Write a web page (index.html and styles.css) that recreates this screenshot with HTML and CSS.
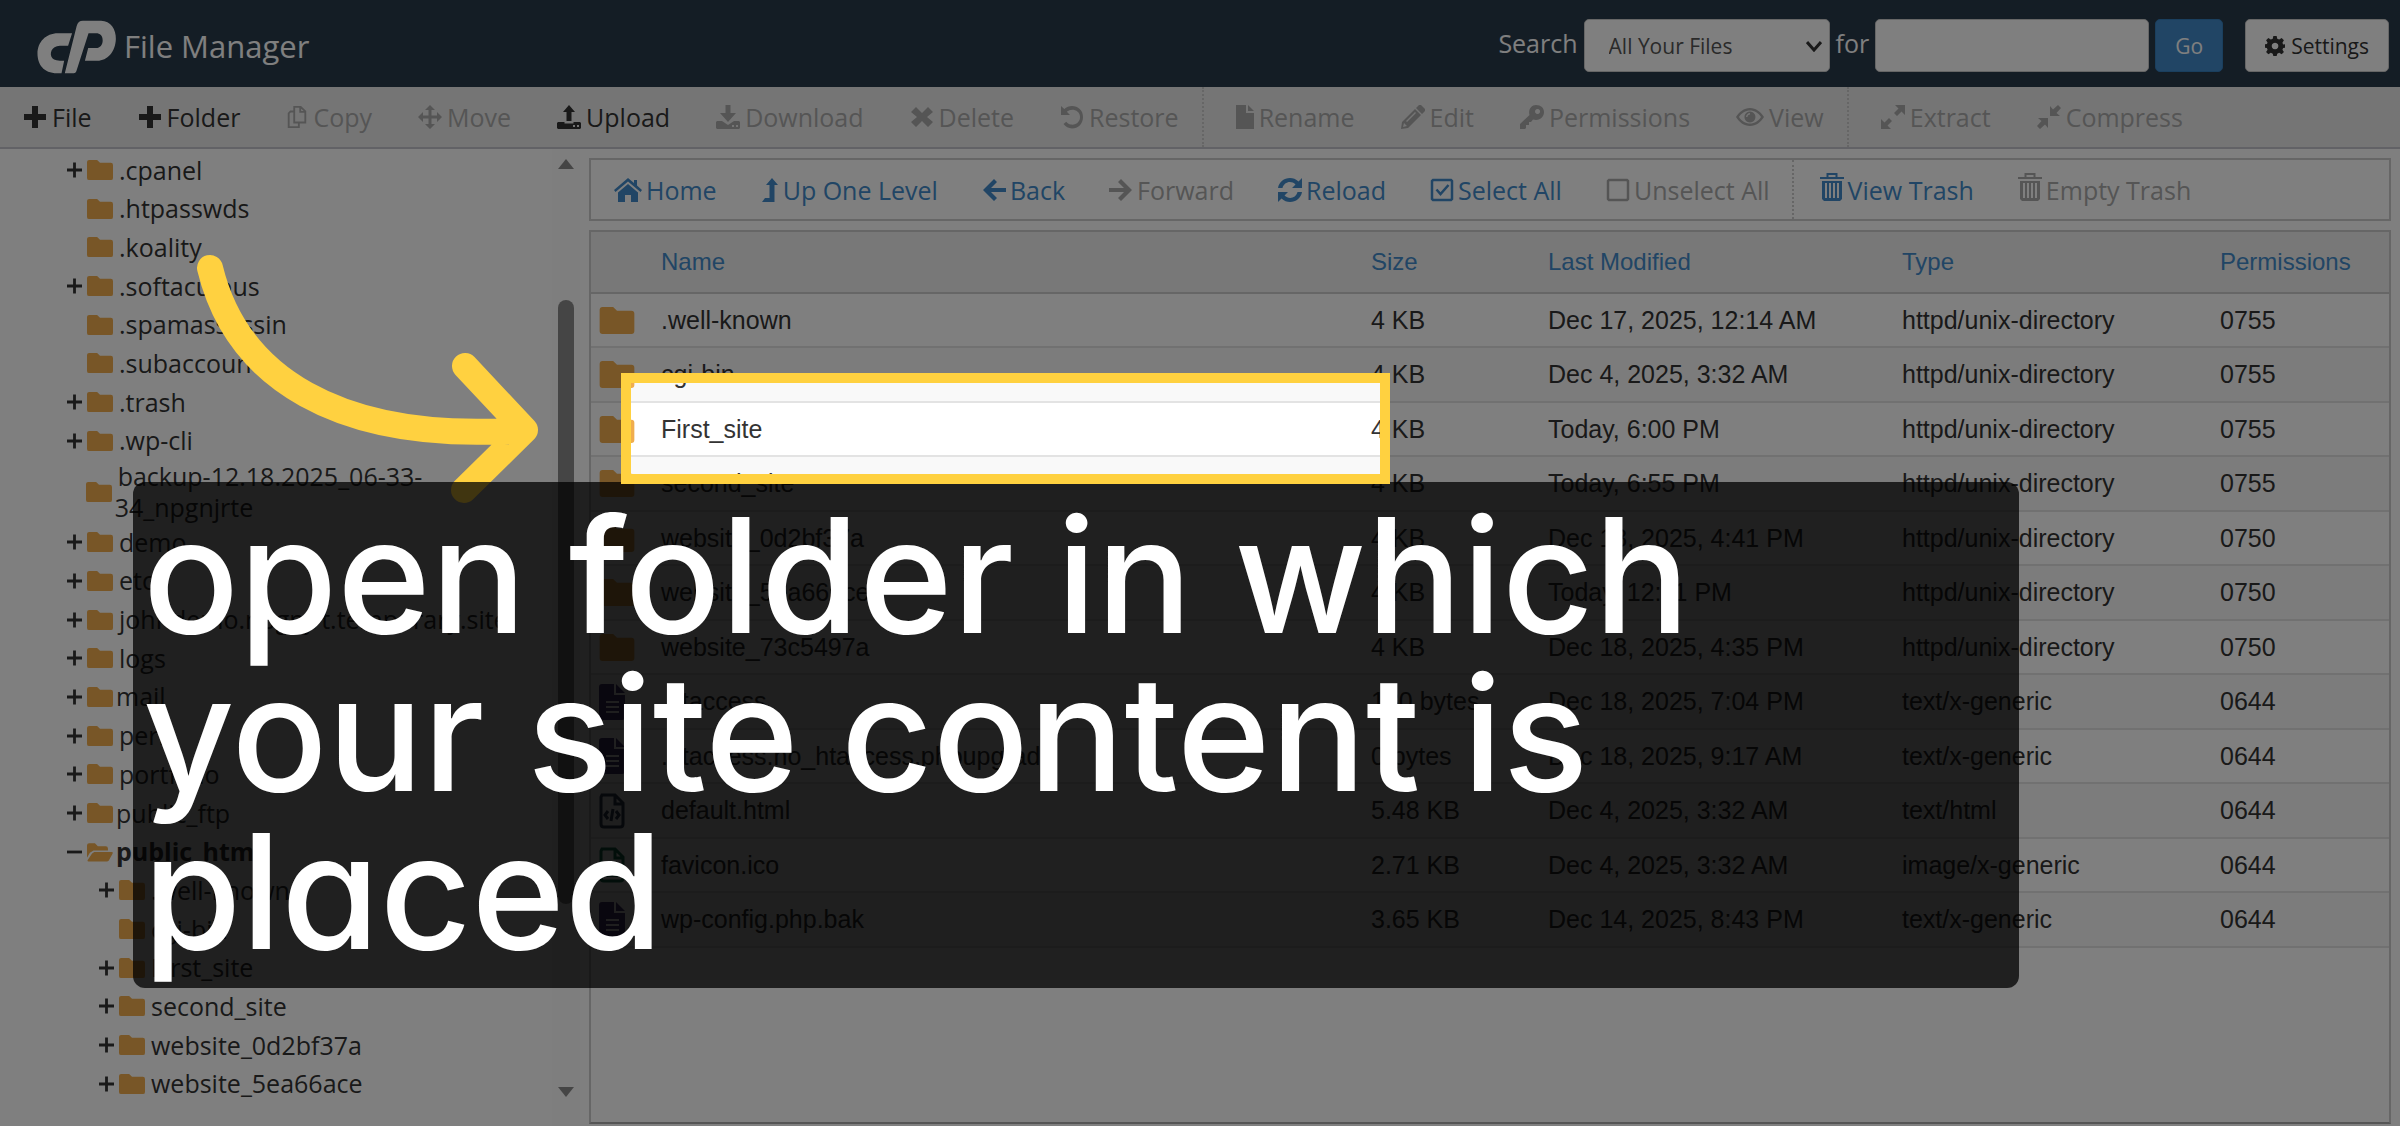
FILE: index.html
```html
<!DOCTYPE html>
<html lang="en">
<head>
    <meta charset="UTF-8">
    <meta name="viewport" content="width=device-width, initial-scale=1.0">
    <title>File Manager</title>
    <link rel="stylesheet" href="styles.css">
</head>
<body>
    <!-- Icon set -->
    <svg class="sprite" aria-hidden="true">
        <symbol id="i-plus" viewBox="0 0 24 24"><path d="M9 1h6v8h8v6h-8v8H9v-8H1V9h8z"/></symbol>
        <symbol id="i-expand" viewBox="0 0 16 16"><path d="M6.500 0h3v6.500H16v3H9.500V16h-3V9.500H0v-3h6.500z"/></symbol>
        <symbol id="i-collapse" viewBox="0 0 16 16"><path d="M0 6.500h16v3H0z"/></symbol>
        <symbol id="i-chevron" viewBox="0 0 16 12"><path d="M1 2l7 8 7-8" fill="none" stroke="currentColor" stroke-width="3"/></symbol>
        <symbol id="i-copy" viewBox="0 0 22 26"><path d="M8 2h7l5 5v12H8zM14.500 2v5.500H20M8 7H4L2 9v15h11v-5" fill="none" stroke="currentColor" stroke-width="2"/></symbol>
        <symbol id="i-move" viewBox="0 0 24 24"><path d="M12 0l5 5h-3.500v5.500H19V7l5 5-5 5v-3.500h-5.500V19H17l-5 5-5-5h3.500v-5.500H5V17l-5-5 5-5v3.500h5.500V5H7z"/></symbol>
        <symbol id="i-upload" viewBox="0 0 24 24"><path d="M12 0l6 7h-3.500v9h-5V7H6zM1 17h6.500v1.500h9V17H23l1 1v5l-1 1H1l-1-1v-5zM16 20v2h2v-2zm4 0v2h2v-2z" fill-rule="evenodd"/></symbol>
        <symbol id="i-download" viewBox="0 0 24 24"><path d="M9.500 0h5v8H20l-8 9-8-9h5.500zM1 16h5l6 4 6-4h5l1 1v6l-1 1H1l-1-1v-6zM16 20v2h2v-2zm4 0v2h2v-2z" fill-rule="evenodd"/></symbol>
        <symbol id="i-delete" viewBox="0 0 24 24"><path d="M6 2l6 6 6-6 5 5-6 5 6 5-5 5-6-6-6 6-5-5 6-5-6-5z"/></symbol>
        <symbol id="i-restore" viewBox="0 0 24 24"><path d="M1 1v9h9L6.800 6.800C9 5 12 4.300 15 5.200c4 1.300 5.800 5 4.800 8.800-1 4-5 6.300-9 5.500-2-.4-3.500-1.500-4.500-2.800L3.500 19c2 2.700 5 4.300 8.500 4.500 6 0 11-4.500 11-11.500S18 1 12 1C9 1 6.500 2 4.300 4z"/></symbol>
        <symbol id="i-rename" viewBox="0 0 18 24"><path d="M0 0h10v8h8v16H0zM12 0l6 6h-6z"/></symbol>
        <symbol id="i-edit" viewBox="0 0 24 24"><path d="M18 0h2l4 4v2l-3 3-6-6zM14 4l6 6L7 23l-7 1 1-7zM3 18l-1 4 4-1zM14 7L5 16l1 1 9-9z" fill-rule="evenodd"/></symbol>
        <symbol id="i-key" viewBox="0 0 24 24"><path d="M16 0c5 0 8 3 8 7s-3 8-8 8l-3-.5L11 17H9v3H6v3l-1 1H0v-5L9.500 10C8 5 11 0 16 0zm1.500 4a2.500 2.500 0 1 0 .1 0z" fill-rule="evenodd"/></symbol>
        <symbol id="i-eye" viewBox="0 0 28 24"><path d="M14 3c6 0 11 4 14 9-3 5-8 9-14 9S3 17 0 12c3-5 8-9 14-9zm0 2.500C9.500 5.500 5.500 8 3 12c2.500 4 6.500 6.500 11 6.500S22.500 16 25 12c-2.500-4-6.500-6.500-11-6.500zm0 1a5.500 5.500 0 1 1-.1 0zm0 1.500c-2 0-4 2-4 4h1.500c0-1.500 1-2.500 2.500-2.500z" fill-rule="evenodd"/></symbol>
        <symbol id="i-extract" viewBox="0 0 24 24"><path d="M14 0h10v10l-3.500-3.500-4.500 4.500-3-3 4.500-4.500zM8 13l3 3-4.500 4.500L10 24H0V14l3.500 3.500z"/></symbol>
        <symbol id="i-compress" viewBox="0 0 24 24"><path d="M13 1v10h10l-3.500-3L24 3l-3-3-5 4.500zM1 13h10v10l-3-3.500L3 24l-3-3 4.500-5z"/></symbol>
        <symbol id="i-gear" viewBox="0 0 24 24"><path d="M10 0h4l.7 3.300 2.300 1 3-1.800 2.700 2.700L20.900 8l.9 2.200L24 10v4l-2.200.300-.9 2.200 1.800 2.800-2.700 2.700-3-1.800-2.300 1L14 24h-4l-.7-2.800-2.300-1L4 22l-2.700-2.700 1.800-2.800-.9-2.200L0 14v-4l2.200-.300L3.100 8 1.300 5.200 4 2.500l3 1.800 2.300-1zM12 8a4 4 0 1 0 .1 0z" fill-rule="evenodd"/></symbol>
        <symbol id="i-home" viewBox="0 0 28 24"><path d="M14 6l10 8.500V24h-7v-7h-6v7H4v-9.500zM14 0l6 5V2h3v5.500l5 4.500-1.500 2L14 3.500 1.500 14 0 12z"/></symbol>
        <symbol id="i-up" viewBox="0 0 16 24"><path d="M10 0l6 7h-3.500v17H0l3-4h4.500V7H4z"/></symbol>
        <symbol id="i-back" viewBox="0 0 24 24"><path d="M12 1l3 3-6 6h15v4H9l6 6-3 3L1 12z"/></symbol>
        <symbol id="i-forward" viewBox="0 0 24 24"><path d="M12 1L9 4l6 6H0v4h15l-6 6 3 3 11-11z"/></symbol>
        <symbol id="i-reload" viewBox="0 0 24 24"><path d="M0 10C1 4 6 0 12 0c3 0 6 1 8.500 3.500L24 0v10H14l3.500-3.500C13 2 6 4 4.500 10zM24 14c-1 6-6 10-12 10-3 0-6-1-8.500-3.500L0 24V14h10l-3.500 3.500C11 22 18 20 19.500 14z"/></symbol>
        <symbol id="i-checked" viewBox="0 0 24 24"><path d="M3 2h18l1 1v18l-1 1H3l-1-1V3zM6.500 11.500l4 4.500 8-9" fill="none" stroke="currentColor" stroke-width="2.500"/></symbol>
        <symbol id="i-unchecked" viewBox="0 0 24 24"><path d="M3 2h18l1 1v18l-1 1H3l-1-1V3z" fill="none" stroke="currentColor" stroke-width="2.500"/></symbol>
        <symbol id="i-trash" viewBox="0 0 24 28"><path d="M7.500 4V1h9v3M0 5h24" fill="none" stroke="currentColor" stroke-width="2"/><path d="M2 8h20v18l-2 2H4l-2-2zM5 10v15h2V10zm4 0v15h2V10zm4 0v15h2V10zm4 0v15h2V10z" fill-rule="evenodd"/></symbol>
        <symbol id="i-folder" viewBox="0 0 36 28"><path d="M3 0h11l4 4h15q3 0 3 3v18q0 3-3 3H3q-3 0-3-3V3q0-3 3-3z"/></symbol>
        <symbol id="i-folder-open" viewBox="0 0 36 28"><path d="M3 2h8l4 4h11q3 0 3 3v3H9l-5 3-4 7V5q0-3 3-3zM10 14h24q3 0 1 3l-5 9-2 1H2q-2 0-1-2l6-9z"/></symbol>
        <symbol id="i-file" viewBox="0 0 26 36"><path d="M3 0h12v11h11v22q0 3-3 3H3q-3 0-3-3V3q0-3 3-3zM17 0l9 9h-9zM7 17v2h13v-2zm0 5v2h13v-2zm0 5v2h13v-2z" fill-rule="evenodd"/></symbol>
        <symbol id="i-code" viewBox="0 0 26 36"><path d="M3 2h13l8 8v21q0 3-3 3H5q-3 0-3-3V4zM16 2v9h8M9 18l-3 4 3 4m8-8l3 4-3 4m-3-10l-2 12" fill="none" stroke="currentColor" stroke-width="3"/></symbol>
        <symbol id="i-image" viewBox="0 0 26 36"><path d="M3 2h13l8 8v21q0 3-3 3H5q-3 0-3-3V4zM16 2v9h8" fill="none" stroke="currentColor" stroke-width="3"/><path d="M5 30v-4l4-4 3 3 6-7 4 4v8zM6 15h5v5H6z"/></symbol>
    </svg>

    <!-- Top bar with the logo and the search form -->
    <header class="topbar">
        <svg class="logo" viewBox="50 28 240 164" aria-label="cPanel"><path d="M155 68L143 106H118C92 106 84 132 96 145Q102 152 131 152L123 190H110C68 190 50 162 50 130C50 95 75 68 112 68ZM188 30H243C272 30 289 56 288 86C287 125 262 152 232 152H194L204 113H228C240 113 248 103 248 90C248 75 240 68 228 68H205L168 184Q166 190 160 190H133L169 46Q173 30 188 30Z"/></svg>
        <h1>File Manager</h1>
        <form class="search">
            <label for="search-in">Search</label>
            <span class="select-box">
                <select id="search-in"><option>All Your Files</option></select>
                <svg class="chevron"><use href="#i-chevron"/></svg>
            </span>
            <label for="search-text">for</label>
            <input type="text" id="search-text">
            <button type="button" class="go">Go</button>
            <button type="button" class="settings"><svg class="icon"><use href="#i-gear"/></svg>Settings</button>
        </form>
    </header>

    <!-- Actions -->
    <nav class="toolbar">
        <button><svg class="icon"><use href="#i-plus"/></svg>File</button>
        <button><svg class="icon"><use href="#i-plus"/></svg>Folder</button>
        <button disabled><svg class="icon medium"><use href="#i-copy"/></svg>Copy</button>
        <button disabled><svg class="icon"><use href="#i-move"/></svg>Move</button>
        <button><svg class="icon"><use href="#i-upload"/></svg>Upload</button>
        <button disabled><svg class="icon"><use href="#i-download"/></svg>Download</button>
        <button disabled><svg class="icon"><use href="#i-delete"/></svg>Delete</button>
        <button disabled><svg class="icon"><use href="#i-restore"/></svg>Restore</button>
        <span class="divider"></span>
        <button disabled><svg class="icon narrow"><use href="#i-rename"/></svg>Rename</button>
        <button disabled><svg class="icon"><use href="#i-edit"/></svg>Edit</button>
        <button disabled><svg class="icon"><use href="#i-key"/></svg>Permissions</button>
        <button disabled><svg class="icon wide"><use href="#i-eye"/></svg>View</button>
        <span class="divider"></span>
        <button disabled><svg class="icon"><use href="#i-extract"/></svg>Extract</button>
        <button disabled><svg class="icon"><use href="#i-compress"/></svg>Compress</button>
    </nav>

    <div class="main">
        <!-- Directory tree -->
        <aside class="sidebar">
            <ul class="tree">
                <li><svg class="toggle"><use href="#i-expand"/></svg><svg class="folder"><use href="#i-folder"/></svg><a href="#">.cpanel</a></li>
                <li><span class="toggle"></span><svg class="folder"><use href="#i-folder"/></svg><a href="#">.htpasswds</a></li>
                <li><span class="toggle"></span><svg class="folder"><use href="#i-folder"/></svg><a href="#">.koality</a></li>
                <li><svg class="toggle"><use href="#i-expand"/></svg><svg class="folder"><use href="#i-folder"/></svg><a href="#">.softaculous</a></li>
                <li><span class="toggle"></span><svg class="folder"><use href="#i-folder"/></svg><a href="#">.spamassassin</a></li>
                <li><span class="toggle"></span><svg class="folder"><use href="#i-folder"/></svg><a href="#">.subaccounts</a></li>
                <li><svg class="toggle"><use href="#i-expand"/></svg><svg class="folder"><use href="#i-folder"/></svg><a href="#">.trash</a></li>
                <li><svg class="toggle"><use href="#i-expand"/></svg><svg class="folder"><use href="#i-folder"/></svg><a href="#">.wp-cli</a></li>
                <li><span class="toggle"></span><svg class="folder"><use href="#i-folder"/></svg><a href="#">backup-12.18.2025_06-33-34_npgnjrte</a></li>
                <li><svg class="toggle"><use href="#i-expand"/></svg><svg class="folder"><use href="#i-folder"/></svg><a href="#">demo</a></li>
                <li><svg class="toggle"><use href="#i-expand"/></svg><svg class="folder"><use href="#i-folder"/></svg><a href="#">etc</a></li>
                <li><svg class="toggle"><use href="#i-expand"/></svg><svg class="folder"><use href="#i-folder"/></svg><a href="#">johndemo.npgnjrt.temporary.site</a></li>
                <li><svg class="toggle"><use href="#i-expand"/></svg><svg class="folder"><use href="#i-folder"/></svg><a href="#">logs</a></li>
                <li class="special"><svg class="toggle"><use href="#i-expand"/></svg><svg class="folder"><use href="#i-folder"/></svg><a href="#">mail</a></li>
                <li><svg class="toggle"><use href="#i-expand"/></svg><svg class="folder"><use href="#i-folder"/></svg><a href="#">perl</a></li>
                <li><svg class="toggle"><use href="#i-expand"/></svg><svg class="folder"><use href="#i-folder"/></svg><a href="#">portfolio</a></li>
                <li class="special"><svg class="toggle"><use href="#i-expand"/></svg><svg class="folder"><use href="#i-folder"/></svg><a href="#">public_ftp</a></li>
                <li class="special current"><svg class="toggle"><use href="#i-collapse"/></svg><svg class="folder"><use href="#i-folder-open"/></svg><a href="#">public_html</a></li>
                <li class="child"><svg class="toggle"><use href="#i-expand"/></svg><svg class="folder"><use href="#i-folder"/></svg><a href="#">.well-known</a></li>
                <li class="child"><span class="toggle"></span><svg class="folder"><use href="#i-folder"/></svg><a href="#">cgi-bin</a></li>
                <li class="child"><svg class="toggle"><use href="#i-expand"/></svg><svg class="folder"><use href="#i-folder"/></svg><a href="#">First_site</a></li>
                <li class="child"><svg class="toggle"><use href="#i-expand"/></svg><svg class="folder"><use href="#i-folder"/></svg><a href="#">second_site</a></li>
                <li class="child"><svg class="toggle"><use href="#i-expand"/></svg><svg class="folder"><use href="#i-folder"/></svg><a href="#">website_0d2bf37a</a></li>
                <li class="child"><svg class="toggle"><use href="#i-expand"/></svg><svg class="folder"><use href="#i-folder"/></svg><a href="#">website_5ea66ace</a></li>
            </ul>
            <div class="scrollbar" aria-hidden="true">
                <span class="arrow-up"></span>
                <div class="track"><span class="thumb"></span></div>
                <span class="arrow-down"></span>
            </div>
        </aside>

        <!-- Folder content -->
        <section class="content">
            <nav class="actions">
                <button><svg class="icon wide"><use href="#i-home"/></svg>Home</button>
                <button><svg class="icon narrow"><use href="#i-up"/></svg>Up One Level</button>
                <button><svg class="icon"><use href="#i-back"/></svg>Back</button>
                <button disabled><svg class="icon"><use href="#i-forward"/></svg>Forward</button>
                <button><svg class="icon"><use href="#i-reload"/></svg>Reload</button>
                <button><svg class="icon"><use href="#i-checked"/></svg>Select All</button>
                <button disabled><svg class="icon"><use href="#i-unchecked"/></svg>Unselect All</button>
                <span class="divider"></span>
                <button><svg class="icon tall"><use href="#i-trash"/></svg>View Trash</button>
                <button disabled><svg class="icon tall"><use href="#i-trash"/></svg>Empty Trash</button>
            </nav>
            <div class="files">
                <table>
                    <colgroup><col class="c-icon"><col><col class="c-size"><col class="c-date"><col class="c-type"><col class="c-perm"></colgroup>
                    <thead>
                        <tr><th></th><th>Name</th><th>Size</th><th>Last Modified</th><th>Type</th><th>Permissions</th></tr>
                    </thead>
                    <tbody>
                        <tr><td><svg class="dir"><use href="#i-folder"/></svg></td><td>.well-known</td><td>4 KB</td><td>Dec 17, 2025, 12:14 AM</td><td>httpd/unix-directory</td><td>0755</td></tr>
                        <tr><td><svg class="dir"><use href="#i-folder"/></svg></td><td>cgi-bin</td><td>4 KB</td><td>Dec 4, 2025, 3:32 AM</td><td>httpd/unix-directory</td><td>0755</td></tr>
                        <tr><td><svg class="dir"><use href="#i-folder"/></svg></td><td>First_site</td><td>4 KB</td><td>Today, 6:00 PM</td><td>httpd/unix-directory</td><td>0755</td></tr>
                        <tr><td><svg class="dir"><use href="#i-folder"/></svg></td><td>second_site</td><td>4 KB</td><td>Today, 6:55 PM</td><td>httpd/unix-directory</td><td>0755</td></tr>
                        <tr><td><svg class="dir"><use href="#i-folder"/></svg></td><td>website_0d2bf37a</td><td>4 KB</td><td>Dec 18, 2025, 4:41 PM</td><td>httpd/unix-directory</td><td>0750</td></tr>
                        <tr><td><svg class="dir"><use href="#i-folder"/></svg></td><td>website_5ea66ace</td><td>4 KB</td><td>Today, 12:11 PM</td><td>httpd/unix-directory</td><td>0750</td></tr>
                        <tr><td><svg class="dir"><use href="#i-folder"/></svg></td><td>website_73c5497a</td><td>4 KB</td><td>Dec 18, 2025, 4:35 PM</td><td>httpd/unix-directory</td><td>0750</td></tr>
                        <tr><td><svg class="file"><use href="#i-file"/></svg></td><td>.htaccess</td><td>180 bytes</td><td>Dec 18, 2025, 7:04 PM</td><td>text/x-generic</td><td>0644</td></tr>
                        <tr><td><svg class="file"><use href="#i-file"/></svg></td><td>.htaccess.no_htaccess.phpupgrade</td><td>0 bytes</td><td>Dec 18, 2025, 9:17 AM</td><td>text/x-generic</td><td>0644</td></tr>
                        <tr><td><svg class="file code"><use href="#i-code"/></svg></td><td>default.html</td><td>5.48 KB</td><td>Dec 4, 2025, 3:32 AM</td><td>text/html</td><td>0644</td></tr>
                        <tr><td><svg class="file image"><use href="#i-image"/></svg></td><td>favicon.ico</td><td>2.71 KB</td><td>Dec 4, 2025, 3:32 AM</td><td>image/x-generic</td><td>0644</td></tr>
                        <tr><td><svg class="file"><use href="#i-file"/></svg></td><td>wp-config.php.bak</td><td>3.65 KB</td><td>Dec 14, 2025, 8:43 PM</td><td>text/x-generic</td><td>0644</td></tr>
                    </tbody>
                </table>
            </div>
        </section>
    </div>

    <!-- Tutorial step drawn over the page -->
    <div class="guide">
        <div class="spotlight"></div>
        <svg class="arrow" viewBox="0 0 360 260"><path d="M20 18C46 125 145 194 335 180M275 116L335 180L274 240" fill="none" stroke="currentColor" stroke-width="26" stroke-linecap="round" stroke-linejoin="round"/></svg>
        <p class="caption">open folder in which your site content is placed</p>
        <div class="frame"></div>
    </div>
</body>
</html>
```
FILE: styles.css
```css
* {
    box-sizing: border-box;
}

body {
    margin: 0;
    height: 100vh;
    display: flex;
    flex-direction: column;
    position: relative;
    overflow: hidden;
    background-color: #fff;
    color: #333;
    font-family: "Open Sans", "Noto Sans", sans-serif;
    font-size: 25px;
}

svg {
    fill: currentColor;
    flex-shrink: 0;
}

button {
    font: inherit;
    color: inherit;
    background: none;
    border: none;
    padding: 0;
    display: flex;
    align-items: center;
    white-space: nowrap;
}

.sprite {
    display: none;
}

/* Top bar */
.topbar {
    display: flex;
    align-items: center;
    height: 87px;
    padding: 0 11px 0 37px;
    background-color: #293a4a;
    color: #fff;
}

.logo {
    width: 80px;
    height: 54px;
    margin-top: 6px;
}

.topbar h1 {
    margin: 4px 0 0 7px;
    font-size: 31px;
    font-weight: 400;
}

.search {
    display: flex;
    align-items: center;
    gap: 6px;
    margin-left: auto;
    margin-top: 4px;
}

.search label {
    padding-bottom: 6px;
}

.search select,
.search input,
.search button {
    height: 53px;
    border: 1px solid #ccc;
    border-radius: 5px;
    background-color: #fff;
    color: #555;
    font-family: inherit;
    font-size: 21px;
}

.select-box {
    position: relative;
    display: flex;
}

.search select {
    width: 246px;
    padding: 0 24px;
    appearance: none;
}

.chevron {
    position: absolute;
    right: 8px;
    top: 21px;
    width: 16px;
    height: 12px;
    color: #333;
}

.search input {
    width: 274px;
    padding: 0 18px;
}

.search .go {
    padding: 0 19px;
    border-color: #357ebd;
    background-color: #428bca;
    color: #fff;
}

.search .settings {
    gap: 6px;
    margin-left: 16px;
    padding: 0 19px;
    color: #333;
}

.settings .icon {
    width: 20px;
    height: 20px;
}

/* Toolbars */
.toolbar,
.actions {
    display: flex;
    align-items: stretch;
}

.toolbar {
    height: 62px;
    background-color: #ebebeb;
    border-bottom: 2px solid #c4c4cc;
}

.toolbar button {
    gap: 5px;
    padding: 0 23px;
}

.actions button {
    gap: 4px;
    padding: 0 22px;
}

.icon {
    width: 24px;
    height: 24px;
}

.icon.narrow {
    width: 18px;
}

.icon.medium {
    width: 22px;
}

.icon.wide {
    width: 28px;
}

.icon.tall {
    height: 28px;
    margin-top: -6px;
}

.toolbar button:disabled,
.actions button:disabled {
    color: #aaa;
}

.divider {
    margin-right: 9px;
    border-left: 2px dotted #ccc;
}

.actions .divider {
    margin-right: 4px;
}

/* Page body */
.main {
    flex: 1;
    min-height: 0;
    display: flex;
}

.sidebar {
    width: 580px;
    display: flex;
    flex-shrink: 0;
}

.tree {
    flex: 1;
    display: flex;
    flex-direction: column;
    justify-content: space-between;
    margin: 0;
    padding: 2px 30px 23px 67px;
    list-style: none;
    line-height: 31px;
}

.tree li {
    display: flex;
    align-items: center;
    min-height: 38px;
}

.tree a {
    margin-left: 3px;
    text-indent: 3px;
    color: inherit;
    text-decoration: none;
}

.tree .special a {
    text-indent: 0;
}

.tree .current {
    font-weight: 700;
}

.tree .child {
    padding-left: 32px;
}

.toggle {
    width: 15px;
    height: 16px;
    margin-right: 5px;
}

.folder {
    width: 26px;
    height: 22px;
    color: #f0ad4e;
}

.scrollbar {
    width: 28px;
    display: flex;
    flex-direction: column;
    align-items: center;
    padding: 10px 0 29px;
    background-color: #fcfcfc;
}

.arrow-up,
.arrow-down {
    border: 8px solid transparent;
    border-top-width: 0;
    border-bottom: 10px solid #8b8b8b;
}

.arrow-down {
    border-top: 10px solid #8b8b8b;
    border-bottom-width: 0;
}

.track {
    flex: 1;
    width: 16px;
    display: flex;
    flex-direction: column;
    padding: 131px 0 183px;
}

.thumb {
    flex: 1;
    border-radius: 8px;
    background-color: #8b8b8b;
}

.content {
    flex: 1;
    min-width: 0;
    display: flex;
    flex-direction: column;
    gap: 9px;
    padding: 9px 9px 2px;
}

.actions {
    height: 63px;
    padding-left: 1px;
    border: 2px solid #ccc;
    color: #428bca;
}

/* File list */
.files {
    flex: 1;
    border: 2px solid #ccc;
    border-bottom-color: #aaa;
}

table {
    width: 100%;
    table-layout: fixed;
    border-collapse: collapse;
    font-family: "Liberation Sans", Arial, sans-serif;
    font-size: 25px;
}

.c-icon { width: 70px; }
.c-size { width: 177px; }
.c-date { width: 354px; }
.c-type { width: 318px; }
.c-perm { width: 169px; }

th,
td {
    padding: 0;
    text-align: left;
    white-space: nowrap;
}

th {
    height: 61px;
    font-size: 24px;
    font-weight: 400;
    color: #428bca;
    background-color: #f0f0f0;
    border-bottom: 2px solid #ccc;
}

tbody tr {
    height: 54px;
}

tbody tr:nth-child(even) {
    height: 55px;
    background-color: #f9f9f9;
}

td {
    border-bottom: 2px solid #e3e3e3;
}

td svg {
    display: block;
    margin-left: 8px;
}

.dir {
    width: 36px;
    height: 27px;
    color: #f0ad4e;
}

.file {
    width: 26px;
    height: 36px;
    color: #4f3a78;
}

.file.code {
    color: #33405a;
}

.file.image {
    color: #107050;
}

/* Tutorial step: dimmed page, highlighted row, arrow and caption */
.guide {
    position: absolute;
    inset: 0;
    overflow: hidden;
}

.spotlight,
.frame {
    position: absolute;
    left: 621px;
    top: 373px;
    width: 769px;
    height: 111px;
    border: 10px solid transparent;
}

.spotlight {
    box-shadow: 0 0 0 2400px rgba(0, 0, 0, 0.5);
}

.frame {
    border-color: #ffd140;
}

.arrow {
    position: absolute;
    left: 190px;
    top: 250px;
    width: 360px;
    height: 260px;
    color: #ffd140;
}

.caption {
    position: absolute;
    left: 133px;
    top: 482px;
    width: 1886px;
    height: 506px;
    margin: 0;
    padding: 14px 200px 14px 10px;
    border-radius: 12px;
    background-color: rgba(0, 0, 0, 0.75);
    color: #fff;
    font-family: Inter, "Open Sans", sans-serif;
    font-size: 159px;
    font-weight: 500;
    line-height: 158px;
    font-feature-settings: "cv11";
}
```
